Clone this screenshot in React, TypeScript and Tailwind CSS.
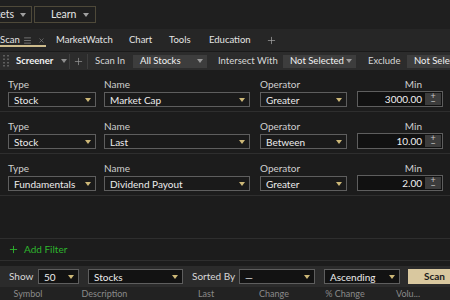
import { Plus, X, Menu } from "lucide-react";

const font = { fontFamily: 'Lato, "Liberation Sans", sans-serif' };

function Caret({ className = "" }: { className?: string }) {
  return (
    <svg viewBox="0 0 6 4" className={`w-[6px] h-[4px] shrink-0 ${className}`}>
      <path d="M0 0h6L3 4z" fill="currentColor" />
    </svg>
  );
}

function Grip() {
  return (
    <svg viewBox="0 0 6 12" className="w-[6px] h-[12px] text-[#5e5e5e]">
      {[1, 4.5, 8, 11].map((y) => (
        <g key={y}>
          <rect x="0" y={y - 1} width="2" height="1.5" fill="currentColor" />
          <rect x="4" y={y - 1} width="2" height="1.5" fill="currentColor" />
        </g>
      ))}
    </svg>
  );
}

function Select({ value, width, dark }: { value: string; width: string; dark?: boolean }) {
  return (
    <div
      className={`${width} h-[15px] flex items-center justify-between pl-[5px] pr-[4px] border border-[#5e5e5e] ${
        dark ? "bg-[#121212]" : "bg-[#1a1a1a]"
      } text-[10px] text-[#ededed] shrink-0`}
    >
      <span className="leading-none whitespace-nowrap">{value}</span>
      <Caret className="text-[#cdb877]" />
    </div>
  );
}

function NumberInput({ value }: { value: string }) {
  return (
    <div className="w-[86px] h-[16px] flex border border-[#5e5e5e] bg-[#111111]">
      <div className="flex-1 flex items-center justify-end pr-[3px] text-[10px] text-[#f0f0f0] leading-none">
        {value}
      </div>
      <div className="w-[16px] my-[1px] mr-[1px] bg-[#3c3c3c] flex flex-col items-center justify-center text-[#c4c4c4] text-[9px] leading-[6px]">
        <span>+</span>
        <span>−</span>
      </div>
    </div>
  );
}

interface FilterRow {
  type: string;
  name: string;
  operator: string;
  min: string;
}

const rows: FilterRow[] = [
  { type: "Stock", name: "Market Cap", operator: "Greater", min: "3000.00" },
  { type: "Stock", name: "Last", operator: "Between", min: "10.00" },
  { type: "Fundamentals", name: "Dividend Payout", operator: "Greater", min: "2.00" },
];

function ToolSelect({ value, width }: { value: string; width: string }) {
  return (
    <div
      className={`${width} h-[13px] bg-[#3d3d3d] flex items-center justify-between pl-[7px] pr-[4px] text-[9.5px] text-[#f2f2f2] shrink-0`}
    >
      <span className="leading-none whitespace-nowrap">{value}</span>
      <Caret className="text-[#9a9a9a]" />
    </div>
  );
}

export default function App() {
  return (
    <div className="w-[450px] h-[300px] overflow-hidden bg-[#1c1c1c] text-[#d6d6d6]" style={font}>
      {/* Top bar */}
      <div className="h-[29px] bg-[#1f1f1f] flex items-center gap-[2px] overflow-hidden">
        <div className="h-[17px] -ml-[20px] w-[52px] shrink-0 border border-[#4e4939] flex items-center justify-end pr-[5px] gap-[6px] text-[10.5px] text-[#e6e6e6]">
          <span className="leading-none">Markets</span>
          <Caret className="text-[#a0a0a0]" />
        </div>
        <div className="h-[17px] w-[62px] shrink-0 border border-[#4e4939] flex items-center pl-[16px] gap-[7px] text-[10.5px] text-[#e6e6e6]">
          <span className="leading-none">Learn</span>
          <Caret className="text-[#a0a0a0]" />
        </div>
      </div>

      {/* Tabs */}
      <div className="h-[23px] bg-[#262626] flex items-stretch text-[9.5px] text-[#e4e4e4] border-b border-[#1a1a1a] whitespace-nowrap">
        <div className="relative w-[46px] flex items-center shrink-0">
          <span className="leading-none">Scan</span>
          <Menu className="ml-[3px] w-[9px] h-[9px] text-[#8a8a8a]" strokeWidth={2} />
          <X className="w-[7px] h-[7px] ml-[6px] text-[#8a8a8a]" strokeWidth={2} />
          <div className="absolute left-0 right-0 bottom-[4px] h-[2px] bg-[#cdbb8c]" />
        </div>
        <div className="flex items-center pl-[10px]">
          <span className="w-[73px] shrink-0">MarketWatch</span>
          <span className="w-[40px] shrink-0">Chart</span>
          <span className="w-[40px] shrink-0">Tools</span>
          <span className="w-[57px] shrink-0">Education</span>
          <Plus className="w-[11px] h-[11px] text-[#a8a8a8]" strokeWidth={1.5} />
        </div>
      </div>

      {/* Toolbar */}
      <div className="h-[18px] bg-[#2c2c2c] flex items-center text-[9.5px] text-[#d8d8d8] whitespace-nowrap">
        <div className="w-[16px] shrink-0 flex pl-[3px]">
          <Grip />
        </div>
        <span className="w-[45px] shrink-0 font-bold text-[#f2f2f2]">Screener</span>
        <Caret className="text-[#8f8f8f]" />
        <div className="ml-[2px] w-px h-[15px] bg-[#3e3e3e] shrink-0" />
        <Plus className="ml-[3px] w-[11px] h-[11px] text-[#9a9a9a] shrink-0" strokeWidth={1.5} />
        <div className="ml-[3px] w-px h-[15px] bg-[#3e3e3e] shrink-0" />
        <span className="ml-[7px] w-[38px] shrink-0">Scan In</span>
        <ToolSelect value="All Stocks" width="w-[74px]" />
        <span className="ml-[11px] w-[65px] shrink-0">Intersect With</span>
        <ToolSelect value="Not Selected" width="w-[73px]" />
        <span className="ml-[12px] w-[39px] shrink-0">Exclude</span>
        <ToolSelect value="Not Selected" width="w-[74px]" />
      </div>

      {/* Filters */}
      <div className="bg-[#1c1c1c]">
        {rows.map((row, i) => (
          <div key={i} className="pt-[8px] pb-[4px] px-[8px] border-b border-[#2e2e2e] flex">
            <div className="w-[88px] shrink-0">
              <div className="h-[12px] text-[10px] leading-[12px] text-[#cfcfcf]">Type</div>
              <div className="mt-[1px] pt-[1px]">
                <Select value={row.type} width="w-[88px]" />
              </div>
            </div>
            <div className="ml-[8px] w-[146px] shrink-0">
              <div className="h-[12px] text-[10px] leading-[12px] text-[#cfcfcf]">Name</div>
              <div className="mt-[1px] pt-[1px]">
                <Select value={row.name} width="w-[146px]" />
              </div>
            </div>
            <div className="ml-[10px] w-[87px] shrink-0">
              <div className="h-[12px] text-[10px] leading-[12px] text-[#cfcfcf]">Operator</div>
              <div className="mt-[1px] pt-[1px]">
                <Select value={row.operator} width="w-[87px]" />
              </div>
            </div>
            <div className="ml-[10px] w-[86px] shrink-0">
              <div className="h-[12px] text-[10px] leading-[12px] text-[#cfcfcf] text-right pr-[21px]">Min</div>
              <div className="mt-[1px]">
                <NumberInput value={row.min} />
              </div>
            </div>
          </div>
        ))}
        <div className="h-[43px] border-b border-[#2e2e2e]" />
        <div className="h-[22px] flex items-center pl-[8px] gap-[5px] text-[10px] text-[#2db52d] border-b border-[#2e2e2e]">
          <Plus className="w-[11px] h-[11px]" strokeWidth={2} />
          <span>Add Filter</span>
        </div>
      </div>

      <div className="h-[5px] bg-[#1c1c1c]" />

      {/* Bottom bar */}
      <div className="h-[21px] bg-[#2b2b2b] flex items-center text-[10px] text-[#d8d8d8] whitespace-nowrap">
        <span className="ml-[9px] w-[29px] shrink-0">Show</span>
        <Select value="50" width="w-[41px]" dark />
        <div className="ml-[9px]">
          <Select value="Stocks" width="w-[95px]" dark />
        </div>
        <span className="ml-[9px] w-[47px] shrink-0">Sorted By</span>
        <Select value="—" width="w-[76px]" dark />
        <div className="ml-[9px]">
          <Select value="Ascending" width="w-[76px]" dark />
        </div>
        <div className="ml-[8px] h-[15px] w-[50px] bg-[#d9c89f] flex items-center pl-[16px] text-[#1c1c1c] font-bold shrink-0">
          Scan
        </div>
      </div>

      {/* Column headers */}
      <div className="h-[13px] bg-[#222222] flex text-[9px] text-[#8a8a8a] leading-[13px] whitespace-nowrap">
        <span className="w-[56px] text-center shrink-0">Symbol</span>
        <span className="w-[97px] text-center shrink-0">Description</span>
        <span className="w-[106px] text-center shrink-0">Last</span>
        <span className="w-[30px] text-center shrink-0">Change</span>
        <span className="ml-[36px] w-[40px] text-center shrink-0">% Change</span>
        <span className="ml-[23px] w-[40px] text-center shrink-0">Volu...</span>
      </div>
    </div>
  );
}
